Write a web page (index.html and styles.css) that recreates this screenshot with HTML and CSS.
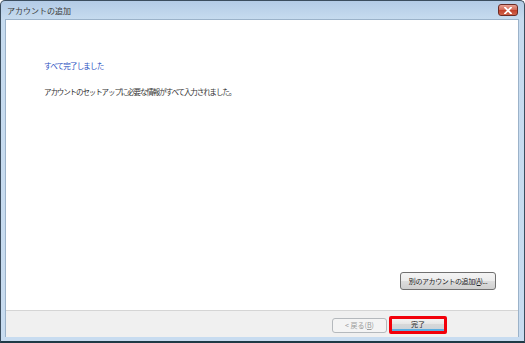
FILE: index.html
```html
<!DOCTYPE html>
<html lang="ja">
<head>
    <meta charset="UTF-8">
    <title>アカウントの追加</title>
    <link rel="stylesheet" href="styles.css">
</head>
<body>
    <div class="window">
        <div class="titlebar">
            <span class="title">アカウントの追加</span>
            <button class="close-btn" aria-label="閉じる">
                <svg width="8" height="7" viewBox="0 0 8 7">
                    <path d="M1 0.5 L7 6.5 M7 0.5 L1 6.5" stroke="#fff" stroke-width="1.8" stroke-linecap="square"/>
                </svg>
            </button>
        </div>
        <div class="client">
            <div class="content">
                <h1 class="heading">すべて完了しました</h1>
                <p class="message">アカウントのセットアップに必要な情報がすべて入力されました。</p>
                <div class="content-actions">
                    <button class="btn add-btn">別のアカウントの追加(<u>A</u>)...</button>
                </div>
            </div>
            <div class="footer">
                <button class="btn back-btn" disabled>&lt; 戻る(<u>B</u>)</button>
                <span class="highlight">
                    <button class="btn finish-btn">完了</button>
                </span>
            </div>
        </div>
    </div>
</body>
</html>
```

FILE: styles.css
```css
body {
    margin: 0;
    font-family: "Noto Sans CJK JP", "Noto Sans", sans-serif;
    background: #ffffff;
}
.window {
    width: 525px;
    height: 343px;
    box-sizing: border-box;
    display: flex;
    flex-direction: column;
    border: 1px solid #3b4d5e;
    border-bottom: 2px solid #1f3a46;
    border-radius: 5px 5px 0 0;
    padding: 0 5px 4px 4px;
    background: linear-gradient(to bottom, #b3cbe6 0px, #c6dbef 18px, #c8dcf0 100%);
}
.titlebar {
    height: 18px;
    display: flex;
    align-items: center;
    justify-content: space-between;
}
.title {
    font-size: 8px;
    color: #3a3a3a;
    padding-left: 2px;
}
.close-btn {
    width: 20px;
    height: 12px;
    margin: 0 1px 0 0;
    padding: 0;
    border: 1px solid #6b2b25;
    border-radius: 3px;
    background: linear-gradient(to bottom, #e8a193 0%, #d46e5c 45%, #c3422c 55%, #d0654c 100%);
    display: flex;
    align-items: center;
    justify-content: center;
}
.client {
    flex: 1;
    display: flex;
    flex-direction: column;
    border: 1px solid #9bb2c9;
    border-bottom: none;
}
.content {
    flex: 1;
    display: flex;
    flex-direction: column;
    background: #ffffff;
    padding: 41px 22px 20px 38px;
}
.heading {
    margin: 0;
    font-size: 7.5px;
    font-weight: normal;
    line-height: 10px;
    color: #2a4fbf;
    letter-spacing: -0.8px;
}
.message {
    margin: 16px 0 0 0;
    font-size: 7.5px;
    line-height: 10px;
    color: #333333;
    letter-spacing: -1.1px;
}
.content-actions {
    margin-top: auto;
    display: flex;
    justify-content: flex-end;
}
.btn {
    font-family: "Noto Sans CJK JP", "Noto Sans", sans-serif;
    font-size: 7px;
    color: #222222;
    padding: 0;
    border: 1px solid #707070;
    border-radius: 3px;
    background: linear-gradient(to bottom, #f4f4f4 0%, #ececec 50%, #dddddd 51%, #cfcfcf 100%);
    display: flex;
    align-items: center;
    justify-content: center;
}
.add-btn {
    width: 96px;
    height: 18px;
    letter-spacing: -0.4px;
}
.footer {
    height: 27px;
    border-top: 1px solid #d5d5d5;
    background: #f0f0f0;
    display: flex;
    align-items: center;
    justify-content: flex-end;
    gap: 2px;
    padding: 2px 71px 0 0;
    box-sizing: border-box;
}
.back-btn {
    width: 55px;
    height: 15px;
    color: #9a9a9a;
    border-color: #b5b9bd;
    background: #f4f4f4;
}
.highlight {
    display: flex;
    border: 3px solid #f2000a;
    border-radius: 2px;
}
.finish-btn {
    width: 52px;
    height: 12px;
    border: none;
    border-radius: 0;
    border-bottom: 2px solid #5aaee0;
    background: linear-gradient(to bottom, #f2f2f2 0%, #e6e6e6 50%, #d8d8d8 51%, #cdd4da 100%);
}
```
